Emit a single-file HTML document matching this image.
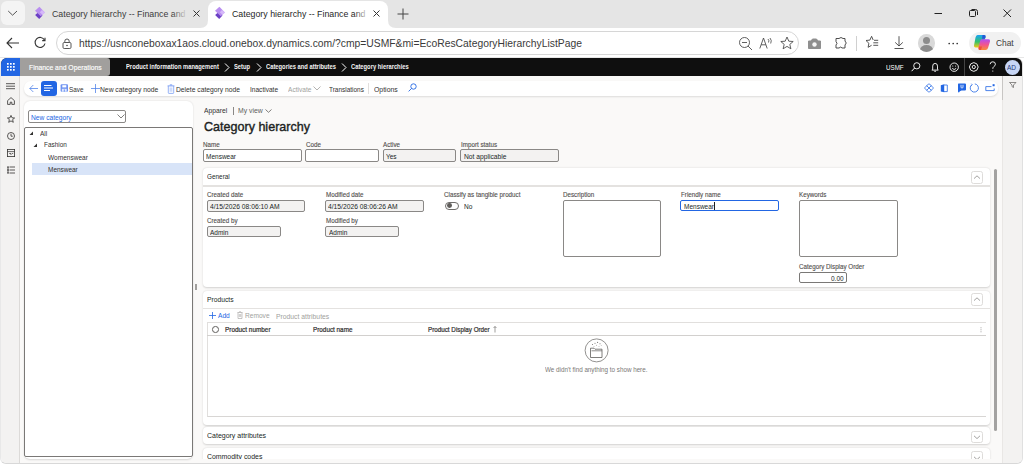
<!DOCTYPE html>
<html><head><meta charset="utf-8">
<style>
*{box-sizing:border-box}
html,body{margin:0;padding:0;width:1024px;height:466px;overflow:hidden;background:#ffffff;font-family:"Liberation Sans",sans-serif;position:relative}
.a{position:absolute}
.t{position:absolute;white-space:nowrap;line-height:1}
svg{position:absolute;overflow:visible}
</style></head><body>

<!-- TAB STRIP -->
<div class="a" style="left:0;top:0;width:1024px;height:28px;background:#e5e5e5"></div>
<div class="a" style="left:1px;top:1px;width:24px;height:24px;border-radius:6px;background:#f4f4f4"></div>
<svg style="left:0;top:0" width="30" height="28"><path d="M8.2 11 L12.6 15.2 L17 11" fill="none" stroke="#444" stroke-width="0.9"/></svg>

<!-- tab 1 -->
<svg style="left:28px;top:4px" width="24" height="20" viewBox="0 0 24 20"><path d="M10.3 8.3 L14.5 11.6 L11.2 15 L7.1 10.9Z" fill="#6b40c4"/><path d="M11.4 2.8 L16.9 8.6 L12.8 12.3 L7.0 6.8Z" fill="#b98ef0"/><path d="M14 6 L16.9 8.6 L14.5 10.8 L11.8 8.2Z" fill="#dcc3fb" opacity="0.8"/></svg>
<div class="t" style="left:52px;top:9.13px;font-size:9.50px;color:#3b3b3b;transform:scaleX(0.926);transform-origin:0 0">Category hierarchy -- Finance and</div>
<div class="a" style="left:172px;top:4px;width:16px;height:20px;background:linear-gradient(90deg,rgba(229,229,229,0),#e5e5e5)"></div>
<svg style="left:193px;top:10px" width="7" height="7"><path d="M0.5 0.5 L6.5 6.5 M6.5 0.5 L0.5 6.5" stroke="#333" stroke-width="1"/></svg>

<!-- tab 2 active -->
<div class="a" style="left:208px;top:1px;width:180px;height:28px;background:#ffffff;border-radius:8px 8px 0 0"></div>
<svg style="left:200px;top:20px" width="8" height="8"><path d="M0 8 Q8 8 8 0 L8 8Z" fill="#ffffff"/></svg>
<svg style="left:388px;top:20px" width="8" height="8"><path d="M8 8 Q0 8 0 0 L0 8Z" fill="#ffffff"/></svg>
<svg style="left:208px;top:4px" width="24" height="20" viewBox="0 0 24 20"><path d="M10.3 8.3 L14.5 11.6 L11.2 15 L7.1 10.9Z" fill="#6b40c4"/><path d="M11.4 2.8 L16.9 8.6 L12.8 12.3 L7.0 6.8Z" fill="#b98ef0"/><path d="M14 6 L16.9 8.6 L14.5 10.8 L11.8 8.2Z" fill="#dcc3fb" opacity="0.8"/></svg>
<div class="t" style="left:232px;top:9.13px;font-size:9.50px;color:#1f1f1f;transform:scaleX(0.926);transform-origin:0 0">Category hierarchy -- Finance and</div>
<div class="a" style="left:354px;top:4px;width:16px;height:20px;background:linear-gradient(90deg,rgba(255,255,255,0),#ffffff)"></div>
<svg style="left:373px;top:10px" width="7" height="7"><path d="M0.5 0.5 L6.5 6.5 M6.5 0.5 L0.5 6.5" stroke="#333" stroke-width="1"/></svg>
<!-- plus -->
<svg style="left:397px;top:8px" width="12" height="12"><path d="M6 0.5 V11.5 M0.5 6 H11.5" stroke="#444" stroke-width="1"/></svg>

<!-- window controls -->
<svg style="left:930px;top:8px" width="90" height="12">
<path d="M4.5 5.5 H12" stroke="#222" stroke-width="1"/>
<rect x="39.5" y="2.5" width="6" height="6" rx="1" fill="none" stroke="#222" stroke-width="1"/>
<path d="M41.5 1.5 H45.5 Q47.5 1.5 47.5 3.5 V7" fill="none" stroke="#222" stroke-width="1"/>
<path d="M73.5 1.5 L81 9 M81 1.5 L73.5 9" stroke="#222" stroke-width="1"/>
</svg>

<!-- ADDRESS ROW -->
<div class="a" style="left:0;top:28px;width:1024px;height:30px;background:#ffffff"></div>
<svg style="left:6px;top:37px" width="14" height="12"><path d="M1 6 H13 M6 1 L1 6 L6 11" fill="none" stroke="#333" stroke-width="1.1"/></svg>
<svg style="left:34px;top:37px" width="13" height="13"><path d="M10.5 3 A5 5 0 1 0 11 6.5" fill="none" stroke="#333" stroke-width="1.1"/><path d="M11 0.8 V3.6 H8.2" fill="none" stroke="#333" stroke-width="1.1"/></svg>
<div class="a" style="left:56px;top:31px;width:743px;height:24px;border-radius:12px;background:#ffffff;border:1px solid #d6d6d6"></div>
<svg style="left:62px;top:37.5px" width="10" height="11"><path d="M2.8 4.5 V3.2 A2.2 2.2 0 0 1 7.2 3.2 V4.5" fill="none" stroke="#444" stroke-width="0.9"/><rect x="1" y="4.5" width="8" height="6" rx="1.2" fill="none" stroke="#444" stroke-width="0.9"/><circle cx="5" cy="7.5" r="0.8" fill="#444"/></svg>
<div class="t" style="left:79px;top:38.7px;font-size:10.33px;color:#3a3a3a">https://usnconeboxax1aos.cloud.onebox.dynamics.com/?cmp=USMF&amp;mi=EcoResCategoryHierarchyListPage</div>


<!-- address right icons -->
<svg style="left:738px;top:36px" width="16" height="16"><circle cx="6.5" cy="6.5" r="5" fill="none" stroke="#444" stroke-width="0.85"/><path d="M4 6.5 H9 M10 10 L14 14" stroke="#444" stroke-width="0.85"/></svg>
<svg style="left:759px;top:37px" width="15" height="13"><path d="M0.8 11.5 L4.5 1 L8.2 11.5 M2.2 7.8 H6.8" fill="none" stroke="#444" stroke-width="0.85"/><path d="M9 2 Q10.5 3.5 9.5 5.5 M11 1 Q13.2 3.5 11.7 6.5" fill="none" stroke="#444" stroke-width="0.8"/></svg>
<svg style="left:780px;top:36px" width="15" height="15"><path d="M7 1 L8.8 5.2 L13.2 5.5 L9.8 8.4 L10.9 12.8 L7 10.4 L3.1 12.8 L4.2 8.4 L0.8 5.5 L5.2 5.2Z" fill="none" stroke="#444" stroke-width="0.85"/></svg>
<svg style="left:807px;top:37px" width="15" height="13"><path d="M1.5 4 H4 L5.5 2 H9.5 L11 4 H13.5 V11.5 H1.5Z" fill="#8f8f8f" stroke="#8f8f8f" stroke-width="1"/><circle cx="7.5" cy="7.5" r="2.2" fill="#f7f7f7"/></svg>
<svg style="left:834px;top:36px" width="15" height="15"><path d="M5 2.5 Q7 0.5 9 2.5 L11 2.5 L11 5 Q13.5 7 11 9 L11 12 L8 12 Q7 10 5 12 L2 12 L2 9 Q4 7.5 2 5.5 L2 2.5Z" fill="none" stroke="#444" stroke-width="0.95"/></svg>
<div class="a" style="left:856px;top:36px;width:1px;height:15px;background:#d0d0d0"></div>
<svg style="left:864px;top:35px" width="17" height="15"><path d="M7.6 1.3 L5.9 5.1 L2 5.5 L4.9 8.3 L4.1 12.3 L7.6 10.3" fill="none" stroke="#444" stroke-width="0.9" stroke-linejoin="round"/><path d="M7.6 1.3 L9.2 5" fill="none" stroke="#444" stroke-width="0.9"/><path d="M10 5.3 H14.2 M9.3 7.8 H14.2 M9.3 10.3 H14.2" stroke="#444" stroke-width="0.9"/></svg>
<svg style="left:892px;top:35px" width="14" height="15"><path d="M7 1.2 V11 M3.2 7.4 L7 11 L10.8 7.4 M2.5 13.5 H11.5" fill="none" stroke="#444" stroke-width="0.9"/></svg>
<div class="a" style="left:917.5px;top:34px;width:17.5px;height:17.5px;border-radius:50%;background:#d9d9d9;overflow:hidden">
 <div class="a" style="left:5.3px;top:2.6px;width:7px;height:7px;border-radius:50%;background:#8c8c8c"></div>
 <div class="a" style="left:2px;top:10.8px;width:13.5px;height:10px;border-radius:50%;background:#8c8c8c"></div>
</div>
<svg style="left:946px;top:41.5px" width="14" height="4"><circle cx="3.2" cy="1.5" r="0.85" fill="#333"/><circle cx="7.2" cy="1.5" r="0.85" fill="#333"/><circle cx="11.2" cy="1.5" r="0.85" fill="#333"/></svg>
<div class="a" style="left:969px;top:32px;width:52px;height:22px;border-radius:11px;background:#f1f1f1"></div>
<svg style="left:970px;top:32px" width="24" height="22" viewBox="0 0 24 22">
 <defs><linearGradient id="cg1" x1="0" y1="0" x2="0" y2="1"><stop offset="0" stop-color="#1aa3f5"/><stop offset="0.55" stop-color="#35c26a"/><stop offset="1" stop-color="#f5c814"/></linearGradient>
 <linearGradient id="cg2" x1="0" y1="0" x2="0" y2="1"><stop offset="0" stop-color="#b44ef0"/><stop offset="0.5" stop-color="#f2548f"/><stop offset="1" stop-color="#fa8d35"/></linearGradient></defs>
 <path d="M7.5 3 H14 Q16 3 15.6 5 L12 14 Q11.5 15.5 10 15.5 H5.5 Q3.8 15.5 4 13.5 L5.5 5.5 Q6 3 7.5 3Z" fill="url(#cg1)"/>
 <path d="M11.5 7.3 H18.5 Q20.5 7.3 20 9.5 L18 16 Q17.5 18 15.5 18 H10 Q8.2 18 8.5 16 L10 9.5 Q10.3 7.3 11.5 7.3Z" fill="url(#cg2)"/>
 <path d="M12.5 3 H14 Q16 3 15.6 5 L15 6.8 H12 Z" fill="#2457d6"/>
 <path d="M9 14.5 L8.5 16 Q8.2 18 10 18 H11 L12 14.5Z" fill="#f0503a"/>
</svg>
<div class="t" style="left:995.5px;top:38.30px;font-size:9.6px;color:#3a3a3a;transform:scaleX(0.87);transform-origin:0 0">Chat</div>

<div class="a" style="left:0;top:57px;width:1024px;height:1px;background:#e6e6e6"></div>
<!-- APP WINDOW -->
<div class="a" style="left:0;top:58px;width:1023px;height:406px;border-radius:6px;background:#faf9f8;overflow:hidden;border-left:1px solid #e8e8e8;border-right:1px solid #e0e0e0;border-bottom:1px solid #d8d8d8">
</div>

<!-- nav bar -->
<div class="a" style="left:1px;top:58px;width:1021px;height:18.4px;background:#0f0f0f;border-radius:6px 6px 0 0"></div>
<div class="a" style="left:1px;top:58px;width:19px;height:18.4px;background:#2266e3;border-radius:6px 0 0 0"></div>
<svg style="left:7px;top:63px" width="8" height="8"><g fill="#fff"><rect x="0.0" y="0.0" width="1.7" height="1.7"/><rect x="3.0" y="0.0" width="1.7" height="1.7"/><rect x="6.0" y="0.0" width="1.7" height="1.7"/><rect x="0.0" y="3.0" width="1.7" height="1.7"/><rect x="3.0" y="3.0" width="1.7" height="1.7"/><rect x="6.0" y="3.0" width="1.7" height="1.7"/><rect x="0.0" y="6.0" width="1.7" height="1.7"/><rect x="3.0" y="6.0" width="1.7" height="1.7"/><rect x="6.0" y="6.0" width="1.7" height="1.7"/></g></svg>
<div class="a" style="left:20px;top:58px;width:90px;height:18.4px;background:#a19f9d;border-radius:0 3px 3px 0"></div>
<div class="t" style="left:28.7px;top:63.7px;font-size:7.6px;color:#ffffff;-webkit-text-stroke:0.15px #fff;transform:scaleX(0.896);transform-origin:0 0">Finance and Operations</div>
<div class="t" style="left:126px;top:64.2px;font-size:6.6px;font-weight:700;color:#f4f4f4;transform:scaleX(0.88);transform-origin:0 0">Product information management</div>
<svg style="left:224px;top:63px" width="6" height="9"><path d="M1 0.5 L5 4.5 L1 8.5" fill="none" stroke="#fff" stroke-width="1"/></svg>
<div class="t" style="left:234px;top:64.2px;font-size:6.6px;font-weight:700;color:#f4f4f4;transform:scaleX(0.88);transform-origin:0 0">Setup</div>
<svg style="left:256px;top:63px" width="6" height="9"><path d="M1 0.5 L5 4.5 L1 8.5" fill="none" stroke="#fff" stroke-width="1"/></svg>
<div class="t" style="left:266px;top:64.2px;font-size:6.6px;font-weight:700;color:#f4f4f4;transform:scaleX(0.88);transform-origin:0 0">Categories and attributes</div>
<svg style="left:341px;top:63px" width="6" height="9"><path d="M1 0.5 L5 4.5 L1 8.5" fill="none" stroke="#fff" stroke-width="1"/></svg>
<div class="t" style="left:351px;top:64.2px;font-size:6.6px;font-weight:700;color:#f4f4f4;transform:scaleX(0.88);transform-origin:0 0">Category hierarchies</div>

<div class="t" style="left:885.6px;top:64.30px;font-size:7.6px;color:#ffffff;transform:scaleX(0.82);transform-origin:0 0">USMF</div>
<svg style="left:905px;top:58px" width="80" height="18"><g fill="none" stroke="#fff" stroke-width="0.9"><circle cx="11.8" cy="7.8" r="3.1"/><path d="M9.6 10 L6.6 13.2" stroke-width="1"/><path d="M27.7 11.2 V8.1 Q27.7 5.4 30.1 5.4 Q32.5 5.4 32.5 8.1 V11.2 L33.3 12.1 H26.9Z" stroke-linejoin="round"/><path d="M29.3 13.3 H30.9"/><circle cx="49.2" cy="9.2" r="4.2"/><path d="M47.2 10.4 Q49.2 12.6 51.2 10.4"/><path d="M68.8 4.6 L71.9 5.9 L73.2 9 L71.9 12.1 L68.8 13.4 L65.7 12.1 L64.4 9 L65.7 5.9Z" stroke-linejoin="round"/><circle cx="68.8" cy="9" r="1.6"/></g><circle cx="47.8" cy="8" r="0.55" fill="#fff"/><circle cx="50.6" cy="8" r="0.55" fill="#fff"/></svg>


<div class="a" style="left:964px;top:58px;width:1px;height:18px;background:#444"></div>

<svg style="left:989px;top:61px" width="8" height="12"><path d="M1.2 3.2 Q1.2 0.8 3.8 0.8 Q6.4 0.8 6.4 3.2 Q6.4 4.8 4.6 5.8 Q3.8 6.3 3.8 7.8" fill="none" stroke="#fff" stroke-width="0.9"/><circle cx="3.8" cy="10" r="0.6" fill="#fff"/></svg>
<div class="a" style="left:1005px;top:59.5px;width:15px;height:15px;border-radius:50%;background:#c7d6f5"></div>
<div class="t" style="left:1007.2px;top:63.6px;font-size:7.4px;color:#1f3b7a;transform:scaleX(0.88);transform-origin:0 0">AD</div>

<!-- sidebar -->
<div class="a" style="left:1px;top:76px;width:19px;height:387px;background:#f3f2f1;border-right:1px solid #dcdad8;border-radius:0 0 0 6px"></div>
<svg style="left:6px;top:83px" width="9" height="7"><path d="M0 0.7 H9 M0 3.2 H9 M0 5.7 H9" stroke="#323130" stroke-width="0.8"/></svg>
<svg style="left:7px;top:97px" width="8" height="8"><path d="M0.6 3.6 L4 0.6 L7.4 3.6 V7.4 H4.8 V5.2 H3.2 V7.4 H0.6Z" fill="none" stroke="#323130" stroke-width="0.8" stroke-linejoin="round"/></svg>
<svg style="left:6.8px;top:114.5px" width="8" height="8"><path d="M4 0.4 L5 2.8 L7.6 3 L5.6 4.6 L6.3 7.3 L4 5.9 L1.7 7.3 L2.4 4.6 L0.4 3 L3 2.8Z" fill="none" stroke="#323130" stroke-width="0.8" stroke-linejoin="round"/></svg>
<svg style="left:6.8px;top:132px" width="8" height="8"><circle cx="4" cy="4" r="3.5" fill="none" stroke="#323130" stroke-width="0.8"/><path d="M4 1.8 V4.2 H5.8" fill="none" stroke="#323130" stroke-width="0.8"/></svg>
<svg style="left:6.8px;top:149px" width="8" height="8"><rect x="0.4" y="0.4" width="7.2" height="7.2" fill="none" stroke="#323130" stroke-width="0.8"/><path d="M0.4 2.6 H7.6 M2.2 4.5 H4 V6 M5 4.5 H6.2" fill="none" stroke="#323130" stroke-width="0.7"/></svg>
<svg style="left:6.5px;top:166px" width="8" height="8"><path d="M2.5 1 H8 M2.5 4 H8 M2.5 7 H8 M1 1 V7" fill="none" stroke="#323130" stroke-width="0.8"/><circle cx="1" cy="1" r="0.8" fill="#323130"/><circle cx="1" cy="4" r="0.8" fill="#323130"/><circle cx="1" cy="7" r="0.8" fill="#323130"/></svg>

<!-- right pane -->
<div class="a" style="left:1002px;top:76px;width:20px;height:387px;background:#f3f2f1;border-left:1px solid #e9e7e5;border-radius:0 0 6px 0"></div>
<div class="a" style="left:1002px;top:76px;width:1px;height:24px;background:#c8c6c4"></div>
<svg style="left:1009px;top:81.5px" width="8" height="6"><path d="M0.5 0.5 H7 L4.5 3 V5.5 L3 4.6 V3Z" fill="none" stroke="#605e5c" stroke-width="0.7"/></svg>

<!-- toolbar -->
<div class="a" style="left:24px;top:81px;width:974px;height:15px;background:#fff;border-radius:7px;box-shadow:0 1px 2px rgba(0,0,0,0.12)"></div>
<svg style="left:29px;top:84px" width="10" height="9"><path d="M0.8 4.5 H9 M4.3 1 L0.8 4.5 L4.3 8" fill="none" stroke="#4a7de8" stroke-width="0.75"/></svg>
<div class="a" style="left:41px;top:80.5px;width:15.5px;height:15.5px;background:#2266e3;border-radius:3px"></div>
<svg style="left:43px;top:84px" width="11" height="9"><path d="M1 1.5 H8.5 M1 4 H10 M1 6.5 H7" stroke="#fff" stroke-width="1"/></svg>
<svg style="left:60px;top:84px" width="9" height="9"><rect x="0.6" y="0.3" width="7.4" height="7.4" rx="1" fill="#6f93f1"/><rect x="2.3" y="1.2" width="4" height="2.2" fill="#fff"/><rect x="1.9" y="4.8" width="4.8" height="2.9" fill="#dfe8fd"/><rect x="3.8" y="5.4" width="1" height="2.3" fill="#6f93f1"/></svg>
<div class="t" style="left:69px;top:85.6px;font-size:7.4px;color:#323130;transform:scaleX(0.86);transform-origin:0 0">Save</div>
<svg style="left:91px;top:84px" width="9" height="9"><path d="M4.5 0 V9 M0 4.5 H9" stroke="#4a7de8" stroke-width="0.75"/></svg>
<div class="t" style="left:100.2px;top:85.72px;font-size:7.63px;color:#323130;transform:scaleX(0.885);transform-origin:0 0">New category node</div>
<svg style="left:167px;top:83.5px" width="8" height="10"><path d="M0.6 1.9 H7.4 M2.8 0.9 H5.2" fill="none" stroke="#6f95f0" stroke-width="0.9"/><path d="M1.3 2 V8.8 Q1.3 9.4 1.9 9.4 H6.1 Q6.7 9.4 6.7 8.8 V2" fill="none" stroke="#7c9ff2" stroke-width="0.8"/><path d="M3.2 3.5 V7.8 M4.8 3.5 V7.8" stroke="#8aa8f3" stroke-width="0.6"/></svg>
<div class="t" style="left:176px;top:85.72px;font-size:7.60px;color:#323130;transform:scaleX(0.885);transform-origin:0 0">Delete category node</div>
<div class="t" style="left:249.8px;top:85.73px;font-size:7.41px;color:#323130;transform:scaleX(0.885);transform-origin:0 0">Inactivate</div>
<div class="t" style="left:287.6px;top:85.73px;font-size:7.46px;color:#a19f9d;transform:scaleX(0.885);transform-origin:0 0">Activate</div>
<svg style="left:313px;top:86px" width="8" height="5"><path d="M0.5 0.5 L4 4 L7.5 0.5" fill="none" stroke="#a19f9d" stroke-width="0.8"/></svg>
<div class="t" style="left:329px;top:85.74px;font-size:7.31px;color:#323130;transform:scaleX(0.885);transform-origin:0 0">Translations</div>
<div class="a" style="left:368px;top:83px;width:1px;height:11px;background:#e1dfdd"></div>
<div class="t" style="left:373.5px;top:85.71px;font-size:7.80px;color:#323130;transform:scaleX(0.885);transform-origin:0 0">Options</div>
<svg style="left:408px;top:83px" width="9" height="9"><circle cx="5.5" cy="3.5" r="2.7" fill="none" stroke="#2266e3" stroke-width="0.9"/><path d="M3.6 5.4 L0.6 8.4" stroke="#2266e3" stroke-width="0.9"/></svg>

<svg style="left:924px;top:83px" width="72" height="11">
<g fill="none" stroke="#2266e3" stroke-width="0.8">
<path d="M4.6 0.9 Q5 0.6 5.4 0.9 L9.1 4.6 Q9.4 5 9.1 5.4 L5.4 9.1 Q5 9.4 4.6 9.1 L0.9 5.4 Q0.6 5 0.9 4.6Z M2.6 2.6 L7.4 7.4 M7.4 2.6 L2.6 7.4"/>
<path d="M20 2 H23.3 V8.6 H20"/>
<path d="M48 1.6 A4.1 4.1 0 1 0 50.8 0.9"/>
<path d="M47.3 0.6 L48.2 1.7 L47 2.8" stroke-width="0.6"/>
<path d="M61.8 3.6 H67.5 M61.8 3.6 V7.6 H70.2 V5.5"/>
</g>
<path d="M16.8 2.2 L20.2 1.2 V9.3 L16.8 8.4Z" fill="#2266e3"/>
<path d="M34.5 0.6 H41 Q42 0.6 42 1.6 V6.4 Q42 7.4 41 7.4 H37.5 Q35.5 7.6 35 9.6 Q34 9.6 34 8.6 V1.6 Q34 0.6 34.5 0.6Z" fill="#2266e3"/>
<path d="M37 1.8 V4.2 Q37 5 38 5 Q39 5 39 4.2 V1.8" fill="none" stroke="#fff" stroke-width="0.8"/>
<rect x="68.6" y="1.2" width="2" height="2" fill="#2266e3"/>
</svg>

<!-- left card -->
<div class="a" style="left:24px;top:101px;width:169px;height:358px;background:#fff;border-radius:6px;box-shadow:0 0.5px 2px rgba(0,0,0,0.14)"></div>
<div class="a" style="left:28px;top:110px;width:98px;height:12.5px;border:1px solid #8a8886;border-radius:2px;background:#fff"></div>
<div class="t" style="left:31.2px;top:113.92px;font-size:7.20px;color:#2266e3;transform:scaleX(0.926);transform-origin:0 0">New category</div>
<svg style="left:117px;top:114px" width="8" height="5"><path d="M0.5 0.5 L4 4 L7.5 0.5" fill="none" stroke="#605e5c" stroke-width="0.8"/></svg>
<div class="a" style="left:24px;top:127px;width:169px;height:330px;border:1px solid #7a7876;border-radius:2px;background:#fff"></div>
<svg style="left:29px;top:131px" width="5" height="5"><path d="M4 0.5 V4 H0.5Z" fill="#323130"/></svg>
<div class="t" style="left:39.7px;top:129.92px;font-size:7.02px;color:#323130;transform:scaleX(0.926);transform-origin:0 0">All</div>
<svg style="left:33px;top:143px" width="5" height="5"><path d="M4 0.5 V4 H0.5Z" fill="#323130"/></svg>
<div class="t" style="left:43.7px;top:142.23px;font-size:6.91px;color:#323130;transform:scaleX(0.926);transform-origin:0 0">Fashion</div>
<div class="t" style="left:47.8px;top:154.22px;font-size:7.07px;color:#323130;transform:scaleX(0.926);transform-origin:0 0">Womenswear</div>
<div class="a" style="left:32px;top:163px;width:160px;height:12px;background:#d8e4f8"></div>
<div class="t" style="left:47.8px;top:166.23px;font-size:6.98px;color:#323130;transform:scaleX(0.926);transform-origin:0 0">Menswear</div>

<!-- splitter handle -->
<div class="a" style="left:194.8px;top:284.2px;width:1.9px;height:5.6px;background:#a19f9d"></div>


<!-- header -->
<div class="t" style="left:204px;top:107.21px;font-size:7.27px;color:#323130;transform:scaleX(0.926);transform-origin:0 0">Apparel</div>
<div class="a" style="left:233px;top:107px;width:0.7px;height:7.5px;background:#8a8886"></div>
<div class="t" style="left:238px;top:107.21px;font-size:7.39px;color:#605e5c;transform:scaleX(0.926);transform-origin:0 0">My view</div>
<svg style="left:264.5px;top:109px" width="7" height="4"><path d="M0.5 0.5 L3.5 3.3 L6.5 0.5" fill="none" stroke="#605e5c" stroke-width="0.8"/></svg>
<div class="t" style="left:203.7px;top:120.2px;font-size:13px;color:#201f1e;-webkit-text-stroke:0.4px #201f1e;transform:scaleX(0.965);transform-origin:0 0">Category hierarchy</div>

<div class="t" style="left:203.2px;top:141.84px;font-size:6.75px;color:#52504e;-webkit-text-stroke:0.12px #52504e;transform:scaleX(0.926);transform-origin:0 0">Name</div>
<div class="a" style="left:203px;top:149px;width:98.5px;height:12.5px;border:1px solid #8a8886;border-radius:2px;background:#fff"></div>
<div class="t" style="left:206.3px;top:152.92px;font-size:7.02px;color:#201f1e;transform:scaleX(0.926);transform-origin:0 0">Menswear</div>
<div class="t" style="left:306px;top:141.84px;font-size:6.75px;color:#52504e;-webkit-text-stroke:0.12px #52504e;transform:scaleX(0.926);transform-origin:0 0">Code</div>
<div class="a" style="left:305.4px;top:149px;width:73.5px;height:12.5px;border:1px solid #8a8886;border-radius:2px;background:#fff"></div>
<div class="t" style="left:383.2px;top:141.84px;font-size:6.75px;color:#52504e;-webkit-text-stroke:0.12px #52504e;transform:scaleX(0.926);transform-origin:0 0">Active</div>
<div class="a" style="left:383px;top:149px;width:73px;height:12.5px;border:1px solid #8a8886;border-radius:2px;background:#f3f2f1"></div>
<div class="t" style="left:385.7px;top:152.92px;font-size:7.02px;color:#201f1e;transform:scaleX(0.926);transform-origin:0 0">Yes</div>
<div class="t" style="left:460.5px;top:141.84px;font-size:6.75px;color:#52504e;-webkit-text-stroke:0.12px #52504e;transform:scaleX(0.926);transform-origin:0 0">Import status</div>
<div class="a" style="left:460.4px;top:149px;width:98.2px;height:12.5px;border:1px solid #8a8886;border-radius:2px;background:#f3f2f1"></div>
<div class="t" style="left:463.5px;top:152.92px;font-size:7.24px;color:#201f1e;transform:scaleX(0.926);transform-origin:0 0">Not applicable</div>

<!-- General card -->
<div class="a" style="left:203px;top:168px;width:786.5px;height:119px;background:#fff;border-radius:4px;box-shadow:0 0.5px 2px rgba(0,0,0,0.16)"></div>
<div class="t" style="left:207.3px;top:173.93px;font-size:6.91px;color:#201f1e;transform:scaleX(0.926);transform-origin:0 0">General</div>
<div class="a" style="left:203px;top:185px;width:786.5px;height:1.5px;background:#e4e2e0"></div>
<div class="a" style="left:970.5px;top:170.5px;width:12.5px;height:13.5px;border:1px solid #dedcda;border-radius:2.5px;background:#fff"></div>
<svg style="left:973px;top:175px" width="8" height="5"><path d="M1 3.6 L4 0.8 L7 3.6" fill="none" stroke="#7a7876" stroke-width="0.7"/></svg>

<div class="t" style="left:207.3px;top:192.34px;font-size:6.75px;color:#52504e;-webkit-text-stroke:0.12px #52504e;transform:scaleX(0.926);transform-origin:0 0">Created date</div>
<div class="a" style="left:207.3px;top:200.3px;width:97.5px;height:11.3px;border:1px solid #8a8886;border-radius:2px;background:#f3f2f1"></div>
<div class="t" style="left:209.7px;top:203.41px;font-size:7.27px;color:#201f1e;transform:scaleX(0.926);transform-origin:0 0">4/15/2026 08:06:10 AM</div>
<div class="t" style="left:207.3px;top:217.84px;font-size:6.75px;color:#52504e;-webkit-text-stroke:0.12px #52504e;transform:scaleX(0.926);transform-origin:0 0">Created by</div>
<div class="a" style="left:207.3px;top:225.5px;width:73.5px;height:11.7px;border:1px solid #8a8886;border-radius:2px;background:#f3f2f1"></div>
<div class="t" style="left:210.4px;top:228.92px;font-size:7.02px;color:#201f1e;transform:scaleX(0.926);transform-origin:0 0">Admin</div>

<div class="t" style="left:325.9px;top:192.34px;font-size:6.75px;color:#52504e;-webkit-text-stroke:0.12px #52504e;transform:scaleX(0.926);transform-origin:0 0">Modified date</div>
<div class="a" style="left:325.2px;top:200.3px;width:98.4px;height:11.3px;border:1px solid #8a8886;border-radius:2px;background:#f3f2f1"></div>
<div class="t" style="left:328.2px;top:203.41px;font-size:7.27px;color:#201f1e;transform:scaleX(0.926);transform-origin:0 0">4/15/2026 08:06:26 AM</div>
<div class="t" style="left:325.9px;top:217.84px;font-size:6.75px;color:#52504e;-webkit-text-stroke:0.12px #52504e;transform:scaleX(0.926);transform-origin:0 0">Modified by</div>
<div class="a" style="left:325.2px;top:225.5px;width:74px;height:11.7px;border:1px solid #8a8886;border-radius:2px;background:#f3f2f1"></div>
<div class="t" style="left:328.5px;top:228.92px;font-size:7.02px;color:#201f1e;transform:scaleX(0.926);transform-origin:0 0">Admin</div>

<div class="t" style="left:444.2px;top:192.34px;font-size:6.75px;color:#52504e;-webkit-text-stroke:0.12px #52504e;transform:scaleX(0.926);transform-origin:0 0">Classify as tangible product</div>
<div class="a" style="left:445.2px;top:201.8px;width:14px;height:8px;border:0.8px solid #6f6d6b;border-radius:4px;background:#fff"></div>
<div class="a" style="left:446.8px;top:203.4px;width:4.8px;height:4.8px;border-radius:50%;background:#5f5d5b"></div>
<div class="t" style="left:463.7px;top:203.10px;font-size:7.3px;color:#201f1e;transform:scaleX(0.9);transform-origin:0 0">No</div>

<div class="t" style="left:562.7px;top:192.34px;font-size:6.75px;color:#52504e;-webkit-text-stroke:0.12px #52504e;transform:scaleX(0.926);transform-origin:0 0">Description</div>
<div class="a" style="left:562.5px;top:200.2px;width:98.4px;height:57px;border:1px solid #8a8886;border-radius:2px;background:#fff"></div>
<div class="t" style="left:680.8px;top:192.34px;font-size:6.75px;color:#52504e;-webkit-text-stroke:0.12px #52504e;transform:scaleX(0.926);transform-origin:0 0">Friendly name</div>
<div class="a" style="left:680.4px;top:200.2px;width:98.4px;height:11.3px;border:1.3px solid #2266e3;border-radius:2px;background:#fff"></div>
<div class="t" style="left:683.9px;top:203.42px;font-size:7.02px;color:#201f1e;transform:scaleX(0.926);transform-origin:0 0">Menswear</div>
<div class="a" style="left:714px;top:202px;width:0.8px;height:8px;background:#201f1e"></div>
<div class="t" style="left:799.4px;top:192.34px;font-size:6.75px;color:#52504e;-webkit-text-stroke:0.12px #52504e;transform:scaleX(0.926);transform-origin:0 0">Keywords</div>
<div class="a" style="left:799.4px;top:199.9px;width:98.4px;height:57.6px;border:1px solid #8a8886;border-radius:2px;background:#fff"></div>
<div class="t" style="left:799.4px;top:264.13px;font-size:6.75px;color:#52504e;-webkit-text-stroke:0.12px #52504e;transform:scaleX(0.926);transform-origin:0 0">Category Display Order</div>
<div class="a" style="left:799.4px;top:272.3px;width:47.5px;height:10.7px;border:1px solid #7a7876;border-radius:2px;background:#fff"></div>
<div class="t" style="left:830.7px;top:274.52px;font-size:7.02px;color:#201f1e;transform:scaleX(0.926);transform-origin:0 0">0.00</div>

<!-- Products card -->
<div class="a" style="left:203px;top:290.5px;width:786.5px;height:134.5px;background:#fff;border-radius:4px;box-shadow:0 0.5px 2px rgba(0,0,0,0.16)"></div>
<div class="t" style="left:207.1px;top:296.41px;font-size:7.28px;color:#201f1e;transform:scaleX(0.926);transform-origin:0 0">Products</div>
<div class="a" style="left:203px;top:307.8px;width:786.5px;height:1.5px;background:#e4e2e0"></div>
<div class="a" style="left:970.9px;top:292.5px;width:12.2px;height:13.7px;border:1px solid #dedcda;border-radius:2.5px;background:#fff"></div>
<svg style="left:973px;top:297px" width="8" height="5"><path d="M1 3.6 L4 0.8 L7 3.6" fill="none" stroke="#7a7876" stroke-width="0.7"/></svg>
<svg style="left:209px;top:311.5px" width="7" height="7"><path d="M3.5 0 V7 M0 3.5 H7" stroke="#2266e3" stroke-width="0.8"/></svg>
<div class="t" style="left:217.6px;top:313.47px;font-size:7.13px;color:#2266e3;transform:scaleX(0.926);transform-origin:0 0">Add</div>
<svg style="left:236.5px;top:311px" width="6" height="8"><path d="M0.5 1.5 H5.5 M2 0.8 H4 M1 1.5 V7.5 H5 V1.5 M2.3 3 V6 M3.7 3 V6" fill="none" stroke="#a19f9d" stroke-width="0.6"/></svg>
<div class="t" style="left:245px;top:313.47px;font-size:7.13px;color:#a19f9d;transform:scaleX(0.926);transform-origin:0 0">Remove</div>
<div class="t" style="left:276.4px;top:313.46px;font-size:7.33px;color:#a19f9d;transform:scaleX(0.926);transform-origin:0 0">Product attributes</div>

<div class="a" style="left:207px;top:321.8px;width:778.7px;height:95px;border:1px solid #e1dfdd;border-right:none;border-bottom:1px solid #d8d6d4"></div>
<div class="a" style="left:207px;top:335px;width:778.7px;height:1px;background:#d2d0ce"></div>
<div class="a" style="left:212px;top:326px;width:6.7px;height:6.7px;border:0.8px solid #605e5c;border-radius:50%"></div>
<div class="t" style="left:225.4px;top:327.0px;font-size:6.9px;color:#323130;-webkit-text-stroke:0.22px #323130;transform:scaleX(0.929);transform-origin:0 0">Product number</div>
<div class="t" style="left:312.5px;top:327.0px;font-size:6.9px;color:#323130;-webkit-text-stroke:0.22px #323130;transform:scaleX(0.919);transform-origin:0 0">Product name</div>
<div class="t" style="left:427.9px;top:327.0px;font-size:6.9px;color:#323130;-webkit-text-stroke:0.22px #323130;transform:scaleX(0.910);transform-origin:0 0">Product Display Order</div>
<svg style="left:492.5px;top:326.2px" width="4" height="7"><path d="M2 0.5 V6.5 M0.5 2 L2 0.5 L3.5 2" fill="none" stroke="#605e5c" stroke-width="0.6"/></svg>
<svg style="left:979.5px;top:327px" width="2" height="6"><circle cx="1" cy="0.8" r="0.5" fill="#8a8886"/><circle cx="1" cy="2.8" r="0.5" fill="#8a8886"/><circle cx="1" cy="4.8" r="0.5" fill="#8a8886"/></svg>

<svg style="left:584px;top:338px" width="26" height="26" viewBox="0 0 26 26"><circle cx="12.6" cy="12.4" r="11.5" fill="none" stroke="#797775" stroke-width="0.8"/>
<path d="M6.5 10.2 H10 L11 11.2 H18 V19.5 H6.5Z" fill="none" stroke="#605e5c" stroke-width="0.8" stroke-linejoin="round"/>
<path d="M7.5 12.8 H18" stroke="#605e5c" stroke-width="0.7"/>
<g fill="#797775"><circle cx="8.5" cy="6.5" r="0.55"/><circle cx="11" cy="5.2" r="0.55"/><circle cx="13.6" cy="4.4" r="0.55"/><circle cx="16" cy="5.8" r="0.55"/><circle cx="10" cy="8.4" r="0.45"/><circle cx="12.5" cy="7.2" r="0.45"/><circle cx="15" cy="8.6" r="0.45"/><circle cx="17.2" cy="7.6" r="0.45"/></g>
</svg>
<div class="t" style="left:545px;top:367.03px;font-size:6.77px;color:#7a7876;transform:scaleX(0.926);transform-origin:0 0">We didn't find anything to show here.</div>

<!-- Category attributes card -->
<div class="a" style="left:203px;top:427.3px;width:786.5px;height:17px;background:#fff;border-radius:4px;box-shadow:0 0.5px 2px rgba(0,0,0,0.16)"></div>
<div class="t" style="left:207px;top:432.20px;font-size:7.56px;color:#201f1e;transform:scaleX(0.926);transform-origin:0 0">Category attributes</div>
<div class="a" style="left:970.5px;top:430.5px;width:12.7px;height:12.7px;border:1px solid #dedcda;border-radius:2.5px;background:#fff"></div>
<svg style="left:973px;top:435px" width="8" height="5"><path d="M1 0.8 L4 3.6 L7 0.8" fill="none" stroke="#7a7876" stroke-width="0.7"/></svg>

<!-- Commodity codes card (clipped) -->
<div class="a" style="left:196px;top:446px;width:800px;height:12.7px;overflow:hidden">
<div class="a" style="left:7px;top:2.2px;width:786.5px;height:20px;background:#fff;border-radius:4px;box-shadow:0 0.5px 2px rgba(0,0,0,0.16)"></div>
<div class="t" style="left:11px;top:7.21px;font-size:7.47px;color:#201f1e;transform:scaleX(0.926);transform-origin:0 0">Commodity codes</div>
<div class="a" style="left:774.5px;top:5px;width:12.7px;height:12.7px;border:1px solid #dedcda;border-radius:2.5px;background:#fff"></div>
<svg style="left:777px;top:9.5px" width="8" height="5"><path d="M1 0.8 L4 3.6 L7 0.8" fill="none" stroke="#7a7876" stroke-width="0.7"/></svg>
</div>

<!-- scrollbar -->
<div class="a" style="left:994px;top:169px;width:3px;height:262px;background:#a3a2a1;border-radius:1.5px"></div>

</body></html>
